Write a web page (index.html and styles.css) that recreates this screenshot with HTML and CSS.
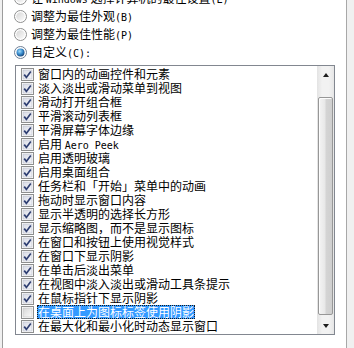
FILE: index.html
```html
<!DOCTYPE html>
<html lang="zh-CN">
<head>
<meta charset="utf-8">
<title>视觉效果</title>
<link rel="stylesheet" href="styles.css">
</head>
<body>
<svg class="defs" width="0" height="0" aria-hidden="true">
  <defs>
    <linearGradient id="boxfill" x1="0" y1="0" x2="1" y2="1">
      <stop offset="0" stop-color="#d9dce6"/>
      <stop offset="1" stop-color="#f4f5f9"/>
    </linearGradient>
    <linearGradient id="radfill" x1="0" y1="0" x2="1" y2="1">
      <stop offset="0" stop-color="#d6d6d6"/>
      <stop offset="1" stop-color="#fbfbfb"/>
    </linearGradient>
    <radialGradient id="dot" cx="0.4" cy="0.35" r="0.7">
      <stop offset="0" stop-color="#a6dcf8"/>
      <stop offset="0.5" stop-color="#3b8fd0"/>
      <stop offset="1" stop-color="#143f73"/>
    </radialGradient>
    <symbol id="chk" viewBox="0 0 13 13">
      <rect x="0.5" y="0.5" width="12" height="12" fill="#fff" stroke="#8e8f8f"/>
      <rect x="2" y="2" width="9" height="9" fill="url(#boxfill)" stroke="#b9bcc8" stroke-width="0.6"/>
      <path d="M3.2 6.6 L5.4 9.4 L9.8 3.4" fill="none" stroke="#2f3f72" stroke-width="1.7"/>
    </symbol>
    <symbol id="unchk" viewBox="0 0 13 13">
      <rect x="0.5" y="0.5" width="12" height="12" fill="#fff" stroke="#8e8f8f"/>
      <rect x="2" y="2" width="9" height="9" fill="url(#radfill)" stroke="#c4c4c4" stroke-width="0.6"/>
    </symbol>
    <symbol id="rad" viewBox="0 0 13 13">
      <circle cx="6.5" cy="6.5" r="6" fill="#fff" stroke="#8e8f8f"/>
      <circle cx="6.5" cy="6.5" r="4.3" fill="url(#radfill)"/>
    </symbol>
    <symbol id="radon" viewBox="0 0 13 13">
      <circle cx="6.5" cy="6.5" r="6" fill="#fff" stroke="#6f7f95"/>
      <circle cx="6.5" cy="6.5" r="4" fill="url(#dot)"/>
    </symbol>
  </defs>
</svg>

<div class="panel">
  <div class="options">
    <div class="opt"><svg class="radio"><use href="#rad"/></svg><span class="otxt">让 <span class="lat">Windows</span> 选择计算机的最佳设置<span class="lat">(L)</span></span></div>
    <div class="opt"><svg class="radio"><use href="#rad"/></svg><span class="otxt">调整为最佳外观<span class="lat">(B)</span></span></div>
    <div class="opt"><svg class="radio"><use href="#rad"/></svg><span class="otxt">调整为最佳性能<span class="lat">(P)</span></span></div>
    <div class="opt"><svg class="radio"><use href="#radon"/></svg><span class="otxt">自定义<span class="lat">(C):</span></span></div>
  </div>

  <div class="listbox">
    <ul class="items">
      <li><svg class="cb"><use href="#chk"/></svg><span class="txt">窗口内的动画控件和元素</span></li>
      <li><svg class="cb"><use href="#chk"/></svg><span class="txt">淡入淡出或滑动菜单到视图</span></li>
      <li><svg class="cb"><use href="#chk"/></svg><span class="txt">滑动打开组合框</span></li>
      <li><svg class="cb"><use href="#chk"/></svg><span class="txt">平滑滚动列表框</span></li>
      <li><svg class="cb"><use href="#chk"/></svg><span class="txt">平滑屏幕字体边缘</span></li>
      <li><svg class="cb"><use href="#chk"/></svg><span class="txt">启用 <span class="lat">Aero Peek</span></span></li>
      <li><svg class="cb"><use href="#chk"/></svg><span class="txt">启用透明玻璃</span></li>
      <li><svg class="cb"><use href="#chk"/></svg><span class="txt">启用桌面组合</span></li>
      <li><svg class="cb"><use href="#chk"/></svg><span class="txt">任务栏和「开始」菜单中的动画</span></li>
      <li><svg class="cb"><use href="#chk"/></svg><span class="txt">拖动时显示窗口内容</span></li>
      <li><svg class="cb"><use href="#chk"/></svg><span class="txt">显示半透明的选择长方形</span></li>
      <li><svg class="cb"><use href="#chk"/></svg><span class="txt">显示缩略图，而不是显示图标</span></li>
      <li><svg class="cb"><use href="#chk"/></svg><span class="txt">在窗口和按钮上使用视觉样式</span></li>
      <li><svg class="cb"><use href="#chk"/></svg><span class="txt">在窗口下显示阴影</span></li>
      <li><svg class="cb"><use href="#chk"/></svg><span class="txt">在单击后淡出菜单</span></li>
      <li><svg class="cb"><use href="#chk"/></svg><span class="txt">在视图中淡入淡出或滑动工具条提示</span></li>
      <li><svg class="cb"><use href="#chk"/></svg><span class="txt">在鼠标指针下显示阴影</span></li>
      <li><svg class="cb"><use href="#unchk"/></svg><span class="txt sel">在桌面上为图标标签使用阴影</span></li>
      <li><svg class="cb"><use href="#chk"/></svg><span class="txt">在最大化和最小化时动态显示窗口</span></li>
    </ul>
    <div class="vscroll">
      <div class="sbtn"><span class="arrow up"></span></div>
      <div class="track">
        <div class="gap-top"></div>
        <div class="thumb"></div>
        <div class="gap-bot"></div>
      </div>
      <div class="sbtn"><span class="arrow down"></span></div>
    </div>
  </div>
</div>
</body>
</html>
```

FILE: styles.css
```css
html, body {
  margin: 0;
  padding: 0;
}
body {
  width: 354px;
  height: 348px;
  overflow: hidden;
  background: #f0f0f0;
  font-family: "Noto Sans CJK SC", "Noto Sans", sans-serif;
  font-size: 12px;
  color: #000;
}
.defs {
  position: absolute;
  width: 0;
  height: 0;
}
.panel {
  margin-left: 2px;
  width: 343px;
  height: 348px;
  background: #fff;
  border-left: 1px solid #9c9c9c;
  border-right: 1px solid #a8a8a8;
  overflow: hidden;
}
.options {
  margin-top: -11px;
  padding-left: 11px;
}
.opt {
  height: 18px;
  display: flex;
  align-items: center;
  gap: 4px;
  white-space: nowrap;
}
.otxt {
  display: inline-block;
  height: 14px;
  line-height: 14px;
  overflow: visible;
}
.radio {
  width: 13px;
  height: 13px;
  flex: none;
}
.lat {
  font-family: "DejaVu Sans Mono", "Liberation Mono", monospace;
  font-size: 10px;
  line-height: 14px;
}
.listbox {
  margin-top: 4px;
  margin-left: 12px;
  width: 318px;
  height: 268px;
  border: 1px solid #828790;
  display: flex;
}
.items {
  list-style: none;
  margin: 0;
  padding: 1px 0 0 5px;
  flex: 1;
  overflow: hidden;
}
.items li {
  height: 14px;
  display: flex;
  align-items: center;
  white-space: nowrap;
  line-height: 14px;
}
.cb {
  width: 13px;
  height: 13px;
  flex: none;
  margin-right: 3px;
}
.txt {
  display: inline-block;
  padding: 0 1px;
  height: 14px;
  line-height: 14px;
}
.sel {
  background: #3399ff;
  color: #fff;
  outline: 1px dotted #1a1a1a;
  outline-offset: -1px;
}
.vscroll {
  width: 17px;
  flex: none;
  display: flex;
  flex-direction: column;
  background: linear-gradient(to right, #e3e3e3, #f2f2f2 30%, #f2f2f2 70%, #e6e6e6);
}
.sbtn {
  height: 17px;
  flex: none;
  display: flex;
  align-items: center;
  justify-content: center;
}
.arrow {
  width: 0;
  height: 0;
  border-left: 3.5px solid transparent;
  border-right: 3.5px solid transparent;
}
.arrow.up {
  border-bottom: 4px solid #1e1e1e;
}
.arrow.down {
  border-top: 4px solid #1e1e1e;
}
.track {
  flex: 1;
  display: flex;
  flex-direction: column;
}
.gap-top {
  height: 14px;
  flex: none;
}
.gap-bot {
  height: 2px;
  flex: none;
}
.thumb {
  flex: 1;
  margin: 0 1px;
  border: 1px solid #979797;
  border-radius: 2px;
  background: linear-gradient(to right, #f4f4f4, #e8e8e8 45%, #d4d4d4 55%, #cfcfcf);
  box-shadow: inset 1px 1px 0 #fcfcfc;
}
```
